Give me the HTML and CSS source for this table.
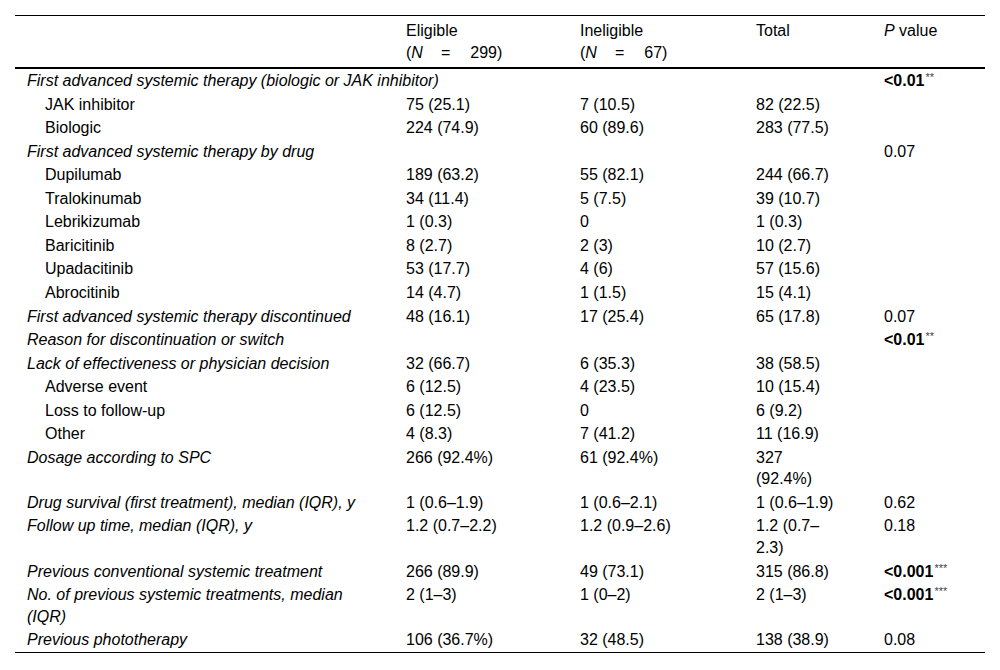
FILE: index.html
```html
<!DOCTYPE html>
<html lang="en">
<head>
<meta charset="utf-8">
<title>Table</title>
<link rel="stylesheet" href="styles.css">
</head>
<body>
<div class="wrap">
<table class="tbl">
  <thead>
    <tr>
      <th class="c1"></th>
      <th class="c2">Eligible<br>(<i>N</i><span class="eq">=</span>299)</th>
      <th class="c3">Ineligible<br>(<i>N</i><span class="eq">=</span>67)</th>
      <th class="c4">Total</th>
      <th class="c5"><i>P</i> value</th>
    </tr>
  </thead>
  <tbody>
    <tr><td class="it" colspan="4">First advanced systemic therapy (biologic or JAK inhibitor)</td><td><b>&lt;0.01</b><sup>**</sup></td></tr>
    <tr><td class="ind">JAK inhibitor</td><td>75 (25.1)</td><td>7 (10.5)</td><td>82 (22.5)</td><td></td></tr>
    <tr><td class="ind">Biologic</td><td>224 (74.9)</td><td>60 (89.6)</td><td>283 (77.5)</td><td></td></tr>
    <tr><td class="it" colspan="4">First advanced systemic therapy by drug</td><td>0.07</td></tr>
    <tr><td class="ind">Dupilumab</td><td>189 (63.2)</td><td>55 (82.1)</td><td>244 (66.7)</td><td></td></tr>
    <tr><td class="ind">Tralokinumab</td><td>34 (11.4)</td><td>5 (7.5)</td><td>39 (10.7)</td><td></td></tr>
    <tr><td class="ind">Lebrikizumab</td><td>1 (0.3)</td><td>0</td><td>1 (0.3)</td><td></td></tr>
    <tr><td class="ind">Baricitinib</td><td>8 (2.7)</td><td>2 (3)</td><td>10 (2.7)</td><td></td></tr>
    <tr><td class="ind">Upadacitinib</td><td>53 (17.7)</td><td>4 (6)</td><td>57 (15.6)</td><td></td></tr>
    <tr><td class="ind">Abrocitinib</td><td>14 (4.7)</td><td>1 (1.5)</td><td>15 (4.1)</td><td></td></tr>
    <tr><td class="it">First advanced systemic therapy discontinued</td><td>48 (16.1)</td><td>17 (25.4)</td><td>65 (17.8)</td><td>0.07</td></tr>
    <tr><td class="it" colspan="4">Reason for discontinuation or switch</td><td><b>&lt;0.01</b><sup>**</sup></td></tr>
    <tr><td class="it">Lack of effectiveness or physician decision</td><td>32 (66.7)</td><td>6 (35.3)</td><td>38 (58.5)</td><td></td></tr>
    <tr><td class="ind">Adverse event</td><td>6 (12.5)</td><td>4 (23.5)</td><td>10 (15.4)</td><td></td></tr>
    <tr><td class="ind">Loss to follow-up</td><td>6 (12.5)</td><td>0</td><td>6 (9.2)</td><td></td></tr>
    <tr><td class="ind">Other</td><td>4 (8.3)</td><td>7 (41.2)</td><td>11 (16.9)</td><td></td></tr>
    <tr><td class="it">Dosage according to SPC</td><td>266 (92.4%)</td><td>61 (92.4%)</td><td>327 (92.4%)</td><td></td></tr>
    <tr><td class="it">Drug survival (first treatment), median (IQR), y</td><td>1 (0.6–1.9)</td><td>1 (0.6–2.1)</td><td>1 (0.6–1.9)</td><td>0.62</td></tr>
    <tr><td class="it">Follow up time, median (IQR), y</td><td>1.2 (0.7–2.2)</td><td>1.2 (0.9–2.6)</td><td>1.2 (0.7–2.3)</td><td>0.18</td></tr>
    <tr><td class="it">Previous conventional systemic treatment</td><td>266 (89.9)</td><td>49 (73.1)</td><td>315 (86.8)</td><td><b>&lt;0.001</b><sup>***</sup></td></tr>
    <tr><td class="it">No. of previous systemic treatments, median (IQR)</td><td>2 (1–3)</td><td>1 (0–2)</td><td>2 (1–3)</td><td><b>&lt;0.001</b><sup>***</sup></td></tr>
    <tr><td class="it">Previous phototherapy</td><td>106 (36.7%)</td><td>32 (48.5)</td><td>138 (38.9)</td><td>0.08</td></tr>
  </tbody>
</table>
</div>
</body>
</html>
```

FILE: styles.css
```css
html, body {
  margin: 0;
  padding: 0;
  background: #ffffff;
}

.wrap {
  padding: 15px;
}

.tbl {
  width: 970px;
  table-layout: fixed;
  border-collapse: collapse;
  font-family: "Liberation Sans", Arial, sans-serif;
  font-size: 16px;
  line-height: 21.55px;
  color: #000;
  border-top: 1px solid #000;
  border-bottom: 1px solid #000;
}

.tbl th,
.tbl td {
  box-sizing: border-box;
  text-align: left;
  vertical-align: top;
}

.c1 { width: 379px; }
.c2 { width: 174px; }
.c3 { width: 176px; }
.c4 { width: 128px; }
.c5 { width: 113px; }

.tbl th {
  font-weight: normal;
  padding: 4px 34px 4px 12px;
  border-bottom: 2px solid #000;
}

.tbl td {
  padding: 1px 34px 1px 12px;
}

.tbl td.it {
  font-style: italic;
}

.tbl td.ind {
  padding-left: 30px;
}

.eq {
  padding: 0 20px 0 18px;
}

.tbl sup {
  font-size: 11px;
  line-height: 0;
  vertical-align: 5px;
  color: #444;
  margin-left: 1px;
}
```
